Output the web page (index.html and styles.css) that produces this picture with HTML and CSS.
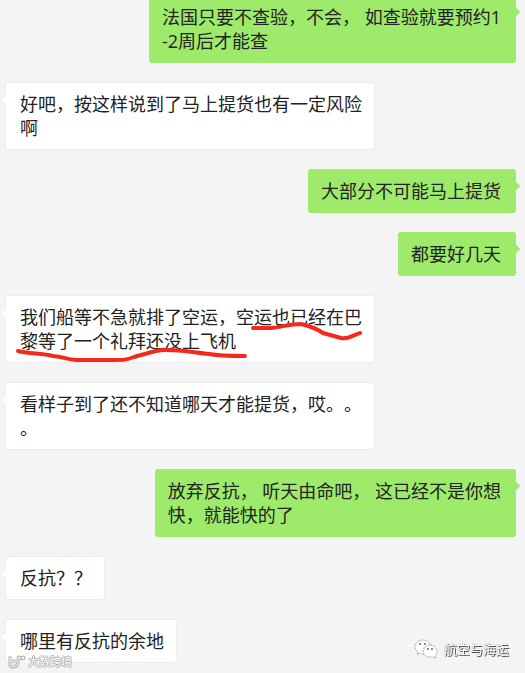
FILE: index.html
```
<!DOCTYPE html>
<html lang="zh-CN">
<head>
  <meta charset="UTF-8">
  <meta name="viewport" content="width=device-width, initial-scale=1.0">
  <title>聊天记录</title>
  <link rel="stylesheet" href="styles.css">
</head>
<body>

  <main class="chat">
    <p class="msg msg--me">法国只要不查验，不会， 如查验就要预约1<br>-2周后才能查</p>
    <p class="msg msg--other">好吧，按这样说到了马上提货也有一定风险<br>啊</p>
    <p class="msg msg--me">大部分不可能马上提货</p>
    <p class="msg msg--me">都要好几天</p>
    <p class="msg msg--other">我们船等不急就排了空运，空运也已经在巴<br>黎等了一个礼拜还没上飞机
      <svg class="marker" viewBox="0 0 368 68" aria-hidden="true">
        <path d="M247 33 L265 33 C276 32 283 29 295 29 C304 31 310 33 317 38 L335 43 C341 44 344 42 354 38"/>
        <path d="M12 56 C24 59 36 58 47 61 C58 62 60 64 70 65 L108 65 C118 65 120 65 128 62 C139 59 147 56 157 55 C172 54 190 58 203 59 C214 61 220 61 239 61"/>
      </svg>
    </p>
    <p class="msg msg--other">看样子到了还不知道哪天才能提货，哎。。<br>。</p>
    <p class="msg msg--me">放弃反抗， 听天由命吧， 这已经不是你想<br>快，就能快的了</p>
    <p class="msg msg--other">反抗？？</p>
    <p class="msg msg--other">哪里有反抗的余地</p>
  </main>

  <div class="source">
    <svg class="source__icon" viewBox="0 0 20 14" aria-hidden="true">
      <g class="source__edge">
        <path d="M2 3 H4 V9 Q4 12 7 12 Q12 12 12 6 V5 M8 4 V8"/>
        <circle cx="13" cy="3" r="1"/>
        <circle cx="17" cy="3" r="1"/>
      </g>
      <path d="M2 3 H4 V9 Q4 12 7 12 Q12 12 12 6 V5 M8 4 V8"/>
      <circle cx="13" cy="3" r="1"/>
      <circle cx="17" cy="3" r="1"/>
    </svg>
    <span>大数跨境</span>
  </div>

  <div class="account">
    <svg class="account__icon" viewBox="0 0 24 20" aria-hidden="true">
      <path d="M9 1 C4 1 1 4 1 8 C1 10 2 12 4 13 L3 16 L6 14 C7 15 9 15 10 15 C14 15 17 12 17 8 C17 4 13 1 9 1 Z"/>
      <path d="M16 6 C12 6 9 9 9 12 C9 16 12 18 16 18 L19 18 L22 19 L21 17 C23 16 23 14 23 12 C23 9 20 6 16 6 Z"/>
      <g class="account__eyes">
        <circle cx="6" cy="5" r="1"/>
        <circle cx="11" cy="5" r="1"/>
        <circle cx="14" cy="10" r="1"/>
        <circle cx="18" cy="10" r="1"/>
      </g>
    </svg>
    <span>航空与海运</span>
  </div>

</body>
</html>
```
FILE: styles.css
```
* { margin: 0; padding: 0; box-sizing: border-box; }
body {
  font-family: "Open Sans", "Noto Sans CJK SC", sans-serif;
  background-color: #f4f4f4;
  color: #222222;
}

/* Conversation, latest message at the bottom */
.chat {
  display: flex;
  flex-direction: column;
  justify-content: flex-end;
  gap: 19px;
  height: 100vh;
  padding: 0 9px 10px 5px;
  overflow: hidden;
}

/* Bubbles */
.msg {
  position: relative;
  flex-shrink: 0;
  font-size: 18px;
  line-height: 24px;
  border-radius: 3px;
  white-space: nowrap;
  text-spacing-trim: space-all;
}
.msg::before {
  content: "";
  position: absolute;
  top: 14px;
  width: 6px;
  height: 6px;
  transform: rotate(45deg);
}
.msg--me {
  align-self: flex-end;
  padding: 10px 15px 10px 13px;
  background-color: #9eea6a;
}
.msg--me::before { right: -3px; background-color: #9eea6a; }
.msg--other {
  align-self: flex-start;
  padding: 9px 12px 9px 14px;
  background-color: #ffffff;
  border: 1px solid #ececec;
}
.msg--other::before { left: -3px; background-color: #ffffff; }

/* Red pen over a message */
.marker {
  position: absolute;
  top: -1px;
  left: 0;
  width: 368px;
  height: 68px;
  fill: none;
  stroke: #f5281c;
  stroke-width: 4;
  stroke-linecap: round;
  stroke-linejoin: round;
}

/* Watermarks */
.source,
.account {
  position: fixed;
  display: flex;
  align-items: center;
  color: #ffffff;
}
.source {
  left: 6px;
  bottom: 3px;
  gap: 2px;
  font-size: 11px;
  line-height: 16px;
  text-shadow: 1px 0 0 #b0b0b0, -1px 0 0 #b0b0b0, 0 1px 0 #b0b0b0, 0 -1px 0 #b0b0b0;
}
.source__icon {
  width: 20px;
  height: 14px;
  fill: none;
  stroke: #ffffff;
}
.source__edge { stroke: #b0b0b0; stroke-width: 3; }
.account {
  right: 16px;
  bottom: 14px;
  gap: 6px;
  font-size: 13px;
  line-height: 20px;
  text-shadow: 1px 1px 0 #555555, 0 0 1px #666666;
}
.account__icon {
  width: 24px;
  height: 20px;
  fill: #ffffff;
  stroke: #aaaaaa;
  stroke-dasharray: 2 1;
}
.account__eyes { fill: #666666; stroke: none; }
```
